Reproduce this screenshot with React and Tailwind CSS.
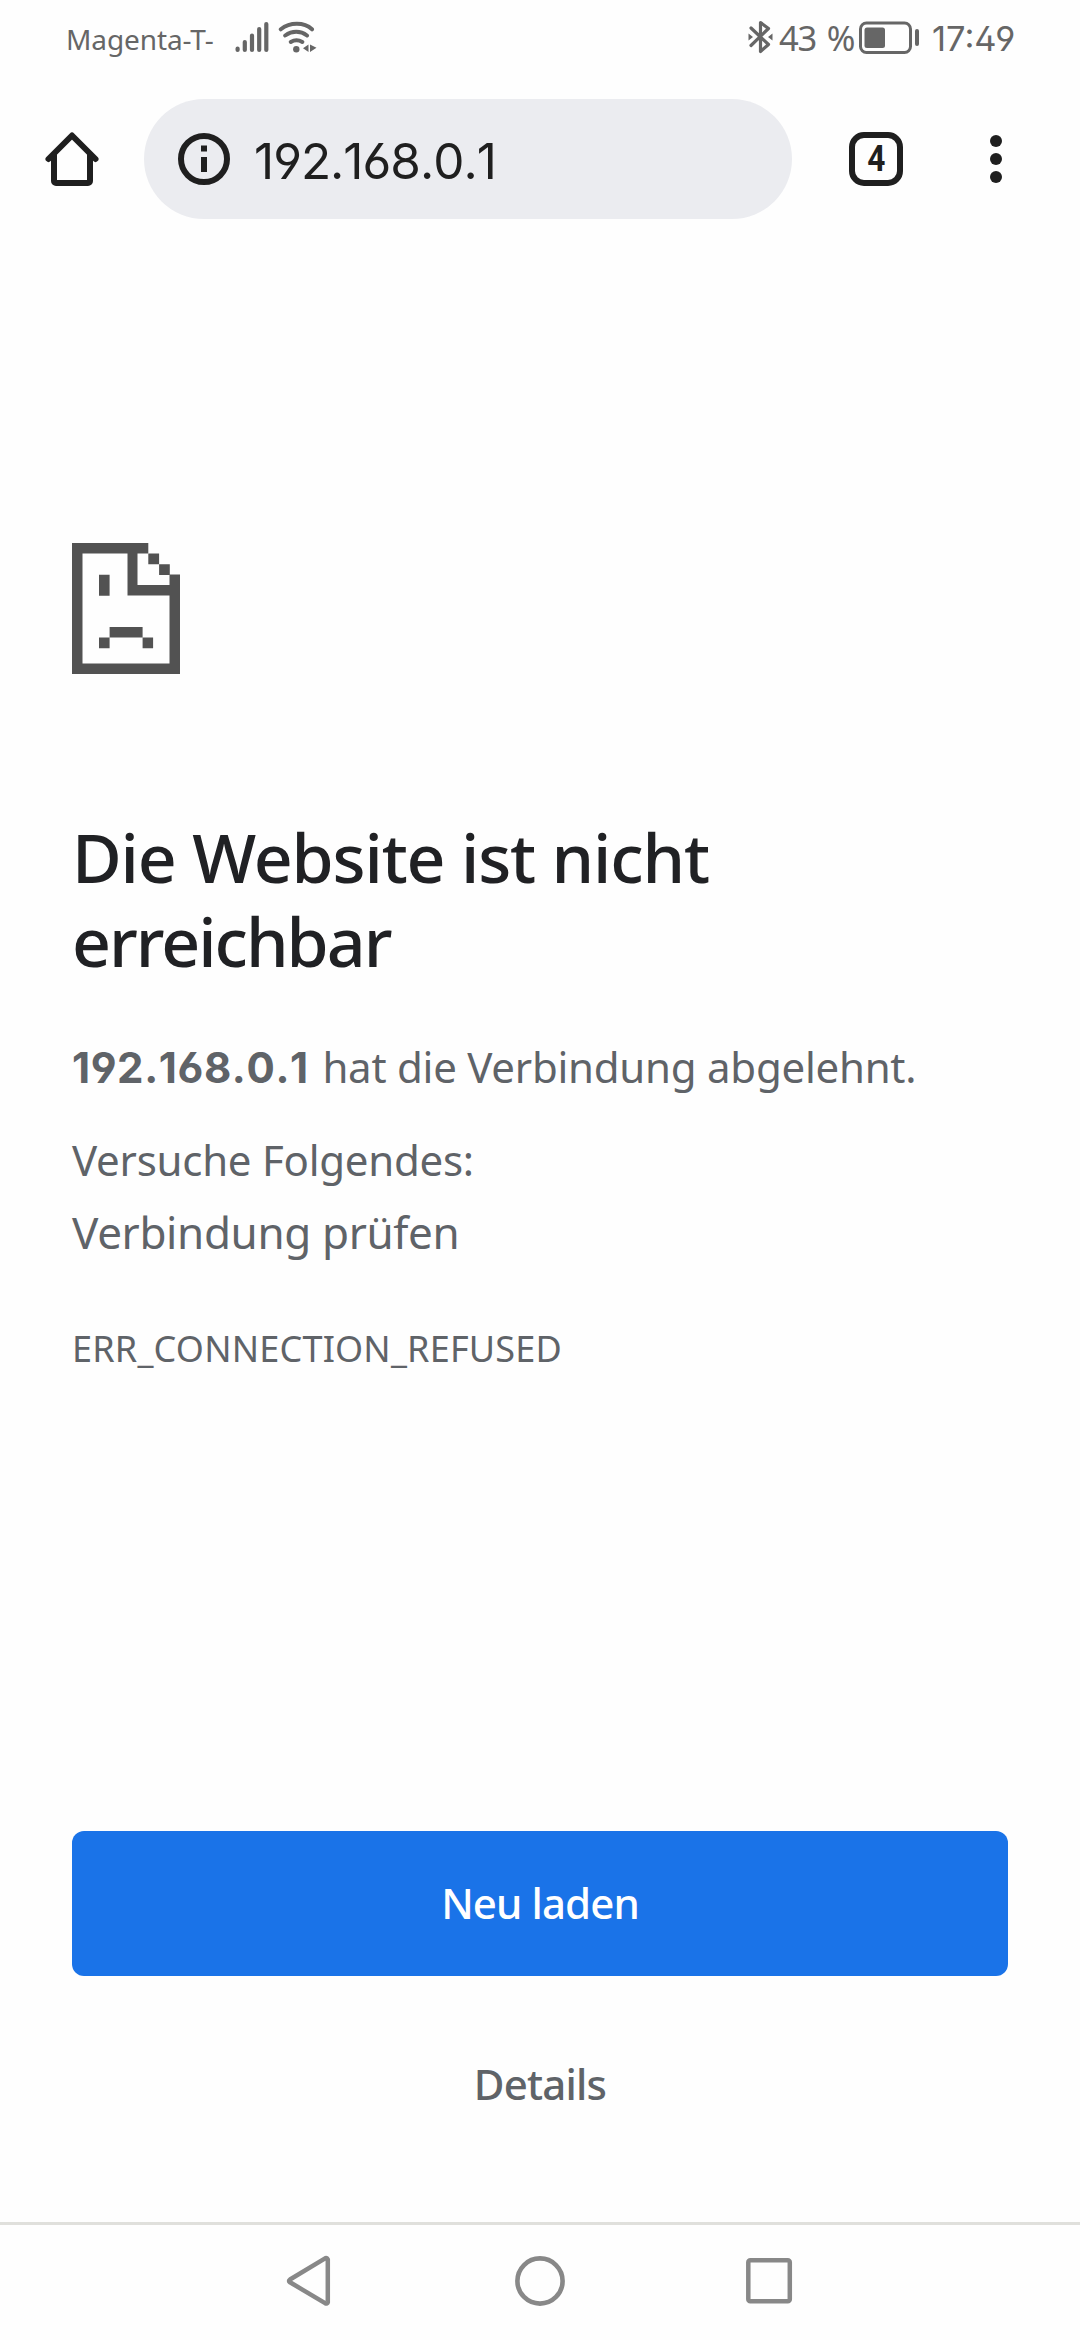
function StatusBar() {
  return (
    <header className="flex h-[75px] shrink-0 items-start text-[#666666]">
      <span className="ml-[66px] mt-[19px] w-[169px] whitespace-nowrap font-['Noto_Sans',sans-serif] text-[28px] leading-[40px] tracking-[-0.1px]">
        Magenta-T-
      </span>
      <svg className="mt-[20px] h-[36px] w-[36px]" viewBox="0 0 36 36" stroke="currentColor" strokeWidth="4.2" strokeLinecap="round">
        <path d="M2.6 28.6V30M9.8 22V30M17 15.5V30M24.2 9V30M31.3 4V30" />
      </svg>
      <svg className="ml-[7px] mt-[20px] h-[36px] w-[40px]" viewBox="0 0 40 36" fill="none" stroke="currentColor" strokeWidth="4" strokeLinecap="round">
        <path d="M2.8 9.3C12 2 26 2 34 9.3M7.2 15.5C14 10.6 22.5 10.6 29 15.5M12.8 22C16.5 19.8 20.5 19.8 24.3 22" />
        <circle cx="18.3" cy="29.3" r="3.2" fill="currentColor" stroke="none" />
        <path d="M30.5 24.5V32L25 28.3ZM32 24.5L38.5 27.7L32 32Z" fill="currentColor" stroke="none" />
      </svg>
      <svg className="ml-[430px] mt-[19px] h-[36px] w-[26px]" viewBox="0 0 26 36" fill="none" stroke="currentColor" strokeWidth="3.2" strokeLinecap="round" strokeLinejoin="round">
        <path d="M3 9L20.5 25.5L12.5 32.5V3.5L20.5 9.5L3 26.5" />
        <path d="M.5 14.5L5 18L.5 21.5ZM24.5 14.5L20 18L24.5 21.5Z" fill="currentColor" stroke="none" />
      </svg>
      <span className="ml-[5px] mt-[16px] w-[80px] whitespace-nowrap font-['Noto_Sans',sans-serif] text-[34.5px] leading-[44px] tracking-[-1.2px] [word-spacing:3px]">
        43 %
      </span>
      <svg className="mt-[21px] h-[34px] w-[62px]" viewBox="0 0 62 34" fill="none">
        <rect x="1.5" y="2" width="50" height="29.5" rx="6" stroke="currentColor" strokeWidth="3" />
        <rect x="5.5" y="6.5" width="20.5" height="20.5" rx="2.5" fill="currentColor" />
        <rect x="56" y="8" width="4" height="17" rx="2" fill="currentColor" />
      </svg>
      <span className="ml-[11px] mt-[17px] whitespace-nowrap font-['Inter',sans-serif] text-[34.5px] leading-[44px] [font-feature-settings:'ss01']">
        17:49
      </span>
    </header>
  );
}

function Toolbar() {
  return (
    <nav className="flex h-[168px] shrink-0 items-center text-[#1f1f1f]">
      <svg className="ml-[42px] h-[60px] w-[60px]" viewBox="0 0 60 60" fill="none" stroke="currentColor" strokeWidth="6" strokeLinejoin="round" strokeLinecap="round">
        <path d="M6.5 30L30 6.5L53.5 30" />
        <path d="M12 26V52a2 2 0 0 0 2 2H46a2 2 0 0 0 2-2V26" />
      </svg>
      <div className="ml-[42px] flex h-[120px] w-[648px] items-center rounded-full bg-[#ebecf0]">
        <svg className="ml-[33px] h-[54px] w-[54px]" viewBox="0 0 54 54" fill="none">
          <circle cx="27" cy="27" r="23" stroke="currentColor" strokeWidth="6" />
          <path d="M24 13.5h6v6h-6zM24 25h6v15h-6z" fill="currentColor" />
        </svg>
        <span className="ml-[23px] mt-[4px] font-['Inter',sans-serif] text-[49.5px] leading-[60px] tracking-[-1px] [font-feature-settings:'ss01'] [font-kerning:none]">
          192.168.0.1
        </span>
      </div>
      <div className="ml-[57px] flex h-[54px] w-[54px] items-center justify-center rounded-[15px] border-[6px] border-current">
        <span className="scale-x-[0.88] font-['Roboto',sans-serif] text-[36px] font-bold leading-[42px]">4</span>
      </div>
      <div className="ml-[87px] flex flex-col gap-[6px]">
        <i className="size-[12px] rounded-full bg-current" />
        <i className="size-[12px] rounded-full bg-current" />
        <i className="size-[12px] rounded-full bg-current" />
      </div>
    </nav>
  );
}

function SadPage() {
  return (
    <svg className="h-[131px] w-[108px]" viewBox="0 0 108 131" fill="#525252">
      <path d="M0 0H76.3V10.5H65.5V42H97.5V31.5H108V131H0ZM10.5 10.5V120.5H97.5V52.5H55.5V10.5Z" fillRule="evenodd" />
      <path d="M76.3 10.5h10.8v10.7h-10.8zM87.1 21.2h10.7v10.8h-10.7zM27 31.7h10.6v21h-10.6zM37.6 84h33v10.5h-33zM27 94.5h10.6v10.7h-10.6zM70.6 94.5h10.5v10.7h-10.5z" />
    </svg>
  );
}

function NavigationBar() {
  return (
    <footer className="flex h-[118px] shrink-0 border-t-[3px] border-[#e0e0dc] pl-[284px] pt-[28px]">
      <svg className="h-[56px] w-[50px]" viewBox="0 0 50 56" fill="none" stroke="#888888" strokeWidth="4.5" strokeLinejoin="round">
        <path d="M43 5.3a1.6 1.6 0 0 0-1.5-.2L6 26.5q-2 1.4 0 2.8L41.5 50.4a1.6 1.6 0 0 0 2.3-1V6.3Z" />
      </svg>
      <svg className="ml-[178px] h-[56px] w-[56px]" viewBox="0 0 56 56" fill="none">
        <circle cx="28" cy="28" r="22.6" stroke="#888888" strokeWidth="4.6" />
      </svg>
      <svg className="ml-[174px] h-[56px] w-[56px]" viewBox="0 0 56 56" fill="none">
        <rect x="6.3" y="7.3" width="41.5" height="41" rx="2" stroke="#888888" strokeWidth="4.5" />
      </svg>
    </footer>
  );
}

export default function App() {
  return (
    <div className="flex h-[2340px] w-[1080px] flex-col bg-[#fefefe]">
      <StatusBar />
      <Toolbar />
      <main className="flex flex-1 flex-col px-[72px] pt-[300px] font-['Noto_Sans',sans-serif] text-[#5f6368]">
        <SadPage />
        <h1 className="mt-[141px] whitespace-nowrap text-[68px] font-medium leading-[84px] text-[#202124]">
          <span className="block tracking-[-1.15px]">Die Website ist nicht</span>
          <span className="block tracking-[-2px]">erreichbar</span>
        </h1>
        <p className="mt-[54px] whitespace-nowrap text-[42px] leading-[60px] tracking-[-0.25px]">
          <strong className="mr-[3px] font-['Inter',sans-serif] tracking-[0.6px] [font-feature-settings:'ss01'] [font-kerning:none]">192.168.0.1</strong>{" "}
          hat die Verbindung abgelehnt.
        </p>
        <p className="mt-[32px] text-[42px] leading-[60px] tracking-[-0.25px]">Versuche Folgendes:</p>
        <p className="mt-[12px] text-[44px] leading-[60px] tracking-[-0.37px]">Verbindung prüfen</p>
        <p className="mt-[57px] text-[36px] leading-[60px] tracking-[0.2px]">ERR_CONNECTION_REFUSED</p>
        <button className="mt-[452px] h-[145px] shrink-0 rounded-[12px] bg-[#1a73e8] pb-[3px] text-[42px] font-medium tracking-[-0.9px] text-white">
          Neu laden
        </button>
        <button className="mt-[35px] h-[145px] shrink-0 text-[42px] font-medium tracking-[-0.8px]">
          Details
        </button>
      </main>
      <NavigationBar />
    </div>
  );
}
